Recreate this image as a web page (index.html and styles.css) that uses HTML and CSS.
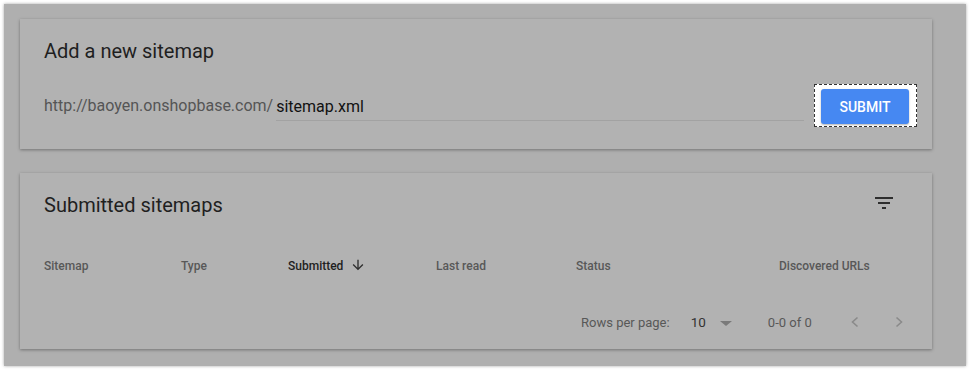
FILE: index.html
```html
<!DOCTYPE html>
<html lang="en">
<head>
  <meta charset="UTF-8">
  <title>Sitemaps</title>
  <link rel="stylesheet" href="styles.css">
</head>
<body>
<main class="panel">

  <section class="card add-card">
    <h2 class="card-title">Add a new sitemap</h2>
    <div class="add-row">
      <span class="url-prefix">http://baoyen.onshopbase.com/</span>
      <input class="url-input" type="text" value="sitemap.xml" aria-label="Enter sitemap URL">
      <div class="submit-focus">
        <button class="submit-btn">SUBMIT</button>
      </div>
    </div>
  </section>

  <section class="card list-card">
    <div class="list-head">
      <h2 class="card-title">Submitted sitemaps</h2>
      <button class="icon-btn" aria-label="Filter">
        <svg width="24" height="24" viewBox="0 0 24 24"><path d="M10 18h4v-2h-4v2zM3 6v2h18V6H3zm3 7h12v-2H6v2z" fill="#2e2e2e"/></svg>
      </button>
    </div>

    <div class="table-head">
      <span>Sitemap</span>
      <span>Type</span>
      <span class="sorted">Submitted
        <svg width="16" height="16" viewBox="0 0 24 24"><path d="M20 12l-1.41-1.41L13 16.17V4h-2v12.17l-5.58-5.59L4 12l8 8 8-8z" fill="#2e2e2e"/></svg>
      </span>
      <span>Last read</span>
      <span>Status</span>
      <span>Discovered URLs</span>
    </div>

    <div class="table-foot">
      <span class="rows-label">Rows per page:</span>
      <span class="rows-value">10</span>
      <svg class="drop" width="24" height="24" viewBox="0 0 24 24"><path d="M6 10l6 5 6-5z" fill="#7a7a7a"/></svg>
      <span class="range">0-0 of 0</span>
      <svg class="chev" width="24" height="24" viewBox="0 0 24 24"><polyline points="14.5,7.5 9.5,12 14.5,16.5" fill="none" stroke="#8a8a8a" stroke-width="1.6"/></svg>
      <svg class="chev" width="24" height="24" viewBox="0 0 24 24"><polyline points="9.5,7.5 14.5,12 9.5,16.5" fill="none" stroke="#8a8a8a" stroke-width="1.6"/></svg>
    </div>
  </section>

</main>
</body>
</html>
```

FILE: styles.css
```css
body {
  margin: 0;
  background: #ffffff;
  font-family: Roboto, "Liberation Sans", sans-serif;
}

.panel {
  margin: 4px;
  width: 929px;
  height: 347px;
  padding: 15px 17px 0 16px;
  background: #afafaf;
  box-shadow: 0 0 3px rgba(0, 0, 0, 0.35);
}

.card {
  background: #b2b2b2;
  box-shadow: 0 1px 3px rgba(0, 0, 0, 0.35);
  width: 912px;
  box-sizing: border-box;
}

.add-card {
  height: 130px;
  padding: 18px 15px 0 24px;
}

.list-card {
  margin-top: 24px;
  height: 176px;
  padding: 18px 24px 0 24px;
}

.card-title {
  margin: 0;
  font-size: 20px;
  line-height: 28px;
  font-weight: 400;
  color: #1f1f1f;
}

.add-row {
  display: flex;
  align-items: center;
  margin-top: 19px;
}

.url-prefix {
  font-size: 16px;
  color: #555;
  margin-right: 3px;
  white-space: nowrap;
}

.url-input {
  flex: 1;
  height: 28px;
  padding: 0;
  margin: 2px 10px 0 0;
  border: none;
  border-bottom: 1px solid #a2a2a2;
  background: transparent;
  font-family: Roboto, "Liberation Sans", sans-serif;
  font-size: 16px;
  color: #111;
  outline: none;
}

.submit-focus {
  padding: 4px 7px 2px 6px;
  border: 1px dashed #333;
  background: #ffffff;
}

.submit-btn {
  display: block;
  width: 88px;
  height: 35px;
  border: none;
  border-radius: 3px;
  background: #4688f2;
  color: #ffffff;
  font-family: Roboto, "Liberation Sans", sans-serif;
  font-size: 14px;
  font-weight: 500;
  box-shadow: 0 1px 2px rgba(0, 0, 0, 0.3);
  cursor: pointer;
}

.list-head {
  display: flex;
  justify-content: space-between;
  align-items: flex-start;
}

.icon-btn {
  width: 24px;
  height: 24px;
  padding: 0;
  margin-right: 12px;
  border: none;
  background: none;
}

.icon-btn svg {
  display: block;
}

.table-head {
  display: grid;
  grid-template-columns: 137px 107px 148px 140px 203px auto;
  margin-top: 37px;
  font-size: 12px;
  line-height: 20px;
  font-weight: 500;
  color: #585858;
}

.table-head .sorted {
  display: flex;
  align-items: center;
  gap: 7px;
  color: #1f1f1f;
}

.table-head svg {
  margin-top: -2px;
}

.table-foot {
  display: flex;
  align-items: center;
  margin-top: 36px;
  padding-left: 537px;
  height: 20px;
  font-size: 13px;
  color: #585858;
  white-space: nowrap;
}

.table-foot > * {
  flex-shrink: 0;
}

.rows-value {
  margin-left: 21px;
  font-size: 13.5px;
  color: #333;
}

.drop {
  margin-left: 8px;
  margin-top: 2px;
}

.range {
  margin-left: 30px;
  font-size: 13px;
}

.chev {
  margin-left: 31px;
}

.chev + .chev {
  margin-left: 20px;
}
```
